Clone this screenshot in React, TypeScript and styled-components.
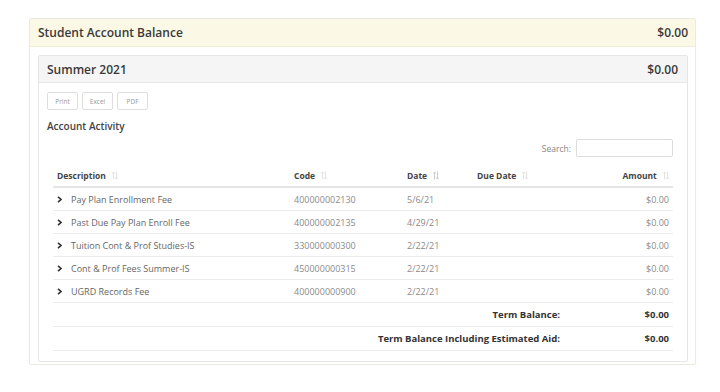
import styled, { createGlobalStyle } from 'styled-components';

const GlobalStyle = createGlobalStyle`
  html, body {
    margin: 0;
    padding: 0;
    background: #ffffff;
    font-family: "Open Sans", "Liberation Sans", sans-serif;
    color: #555;
  }
`;

type Charge = {
  description: string;
  code: string;
  date: string;
  dueDate: string;
  amount: string;
};

const charges: Charge[] = [
  { description: 'Pay Plan Enrollment Fee', code: '400000002130', date: '5/6/21', dueDate: '', amount: '$0.00' },
  { description: 'Past Due Pay Plan Enroll Fee', code: '400000002135', date: '4/29/21', dueDate: '', amount: '$0.00' },
  { description: 'Tuition Cont & Prof Studies-IS', code: '330000000300', date: '2/22/21', dueDate: '', amount: '$0.00' },
  { description: 'Cont & Prof Fees Summer-IS', code: '450000000315', date: '2/22/21', dueDate: '', amount: '$0.00' },
  { description: 'UGRD Records Fee', code: '400000000900', date: '2/22/21', dueDate: '', amount: '$0.00' },
];

const SortIcon = ({ active }: { active?: boolean }) => (
  <Styled.Sort width="6" height="9" viewBox="0 0 6 9" $active={active}>
    <path d="M1.5 8.5V1M0 2.5L1.5 1L3 2.5" />
    <path d="M4.5 0.5V8M3 6.5L4.5 8L6 6.5" />
  </Styled.Sort>
);

const Chevron = () => (
  <Styled.Chevron width="5" height="7" viewBox="0 0 5 7">
    <path d="M1 0.8L4 3.5L1 6.2" />
  </Styled.Chevron>
);

const App = () => {
  return (
    <>
      <GlobalStyle />
      <Styled.Page>
        <Styled.Panel>
          <Styled.PanelHeader>
            <span>Student Account Balance</span>
            <span>$0.00</span>
          </Styled.PanelHeader>
          <Styled.PanelBody>
            <Styled.Term>
              <Styled.TermHeader>
                <span>Summer 2021</span>
                <span>$0.00</span>
              </Styled.TermHeader>
              <Styled.TermBody>
                <Styled.Buttons>
                  <Styled.ExportButton type="button">Print</Styled.ExportButton>
                  <Styled.ExportButton type="button">Excel</Styled.ExportButton>
                  <Styled.ExportButton type="button">PDF</Styled.ExportButton>
                </Styled.Buttons>
                <Styled.SectionTitle>Account Activity</Styled.SectionTitle>
                <Styled.SearchRow>
                  <label>Search:</label>
                  <Styled.SearchInput type="text" />
                </Styled.SearchRow>
                <Styled.Table>
                  <colgroup>
                    <col style={{ width: 237 }} />
                    <col style={{ width: 113 }} />
                    <col style={{ width: 70 }} />
                    <col style={{ width: 93 }} />
                    <col />
                  </colgroup>
                  <thead>
                    <tr>
                      <Styled.Th>
                        Description <SortIcon />
                      </Styled.Th>
                      <Styled.Th>
                        Code <SortIcon />
                      </Styled.Th>
                      <Styled.Th>
                        Date <SortIcon active />
                      </Styled.Th>
                      <Styled.Th>
                        Due Date <SortIcon />
                      </Styled.Th>
                      <Styled.Th $align="right">
                        Amount <SortIcon />
                      </Styled.Th>
                    </tr>
                  </thead>
                  <tbody>
                    {charges.map((c) => (
                      <tr key={c.description}>
                        <Styled.Td>
                          <Chevron />
                          {c.description}
                        </Styled.Td>
                        <Styled.Td $muted>{c.code}</Styled.Td>
                        <Styled.Td $muted>{c.date}</Styled.Td>
                        <Styled.Td $muted>{c.dueDate}</Styled.Td>
                        <Styled.Td $muted $align="right">
                          {c.amount}
                        </Styled.Td>
                      </tr>
                    ))}
                  </tbody>
                  <tfoot>
                    <tr>
                      <Styled.FootCell colSpan={4} $align="right">
                        Term Balance:
                      </Styled.FootCell>
                      <Styled.FootCell $align="right">$0.00</Styled.FootCell>
                    </tr>
                    <tr>
                      <Styled.FootCell colSpan={4} $align="right">
                        Term Balance Including Estimated Aid:
                      </Styled.FootCell>
                      <Styled.FootCell $align="right">$0.00</Styled.FootCell>
                    </tr>
                  </tfoot>
                </Styled.Table>
              </Styled.TermBody>
            </Styled.Term>
          </Styled.PanelBody>
        </Styled.Panel>
      </Styled.Page>
    </>
  );
};

export default App;

const Styled = {
  Page: styled.div`
    padding: 18px 24px 0 29px;
  `,
  Panel: styled.div`
    width: 667px;
    border: 1px solid #ece9df;
    border-radius: 2px;
    box-sizing: border-box;
    box-shadow: 0 1px 2px rgba(0, 0, 0, 0.04);
  `,
  PanelHeader: styled.div`
    height: 27px;
    background: #fcf8e6;
    border-bottom: 1px solid #f1ecd6;
    display: flex;
    align-items: center;
    justify-content: space-between;
    padding: 0 7px 0 8px;
    font-size: 12px;
    font-weight: 600;
    color: #3a3a3a;
  `,
  PanelBody: styled.div`
    padding: 8px 7px 2px 8px;
  `,
  Term: styled.div`
    border: 1px solid #e6e6e6;
    border-radius: 2px;
  `,
  TermHeader: styled.div`
    height: 26px;
    background: #f5f5f5;
    border-bottom: 1px solid #e8e8e8;
    display: flex;
    align-items: center;
    justify-content: space-between;
    padding: 0 9px 0 8px;
    font-size: 12px;
    font-weight: 600;
    color: #3a3a3a;
  `,
  TermBody: styled.div`
    padding: 9px 14px 10px 8px;
  `,
  Buttons: styled.div`
    display: flex;
    gap: 4px;
  `,
  ExportButton: styled.button`
    height: 18px;
    min-width: 31px;
    padding: 0 6px;
    border: 1px solid #dedede;
    border-radius: 2px;
    background: #fff;
    font-family: inherit;
    font-size: 6.5px;
    color: #999;
  `,
  SectionTitle: styled.div`
    margin-top: 9px;
    font-size: 10px;
    font-weight: 600;
    color: #444;
  `,
  SearchRow: styled.div`
    display: flex;
    justify-content: flex-end;
    align-items: center;
    gap: 5px;
    margin-top: 6px;
    font-size: 8.5px;
    color: #888;
  `,
  SearchInput: styled.input`
    width: 97px;
    height: 18px;
    box-sizing: border-box;
    border: 1px solid #dcdcdc;
    border-radius: 2px;
    outline: none;
  `,
  Table: styled.table`
    margin-left: 6px;
    margin-top: 7px;
    width: 620px;
    border-collapse: collapse;
    table-layout: fixed;
  `,
  Th: styled.th<{ $align?: string }>`
    height: 22px;
    padding: 0 4px;
    text-align: ${(p) => p.$align || 'left'};
    font-size: 8.5px;
    font-weight: 700;
    color: #444;
    border-bottom: 2px solid #e6e6e6;
    white-space: nowrap;
  `,
  Sort: styled.svg<{ $active?: boolean }>`
    margin-left: 4px;
    vertical-align: -1px;
    fill: none;
    stroke: ${(p) => (p.$active ? '#c4c4c4' : '#dedede')};
    stroke-width: 0.9;
  `,
  Td: styled.td<{ $muted?: boolean; $align?: string }>`
    height: 22px;
    padding: 0 4px;
    text-align: ${(p) => p.$align || 'left'};
    font-size: 9px;
    color: ${(p) => (p.$muted ? '#8a8a8a' : '#666')};
    border-bottom: 1px solid #ececec;
    white-space: nowrap;
  `,
  Chevron: styled.svg`
    margin-right: 9px;
    vertical-align: -0.5px;
    fill: none;
    stroke: #333;
    stroke-width: 1.6;
  `,
  FootCell: styled.td<{ $align?: string }>`
    height: 23px;
    padding: 0 6px 0 4px;
    text-align: ${(p) => p.$align || 'left'};
    font-size: 9.5px;
    font-weight: 700;
    color: #333;
    border-bottom: 1px solid #ececec;
    &:last-child {
      padding-right: 4px;
    }
  `,
};
